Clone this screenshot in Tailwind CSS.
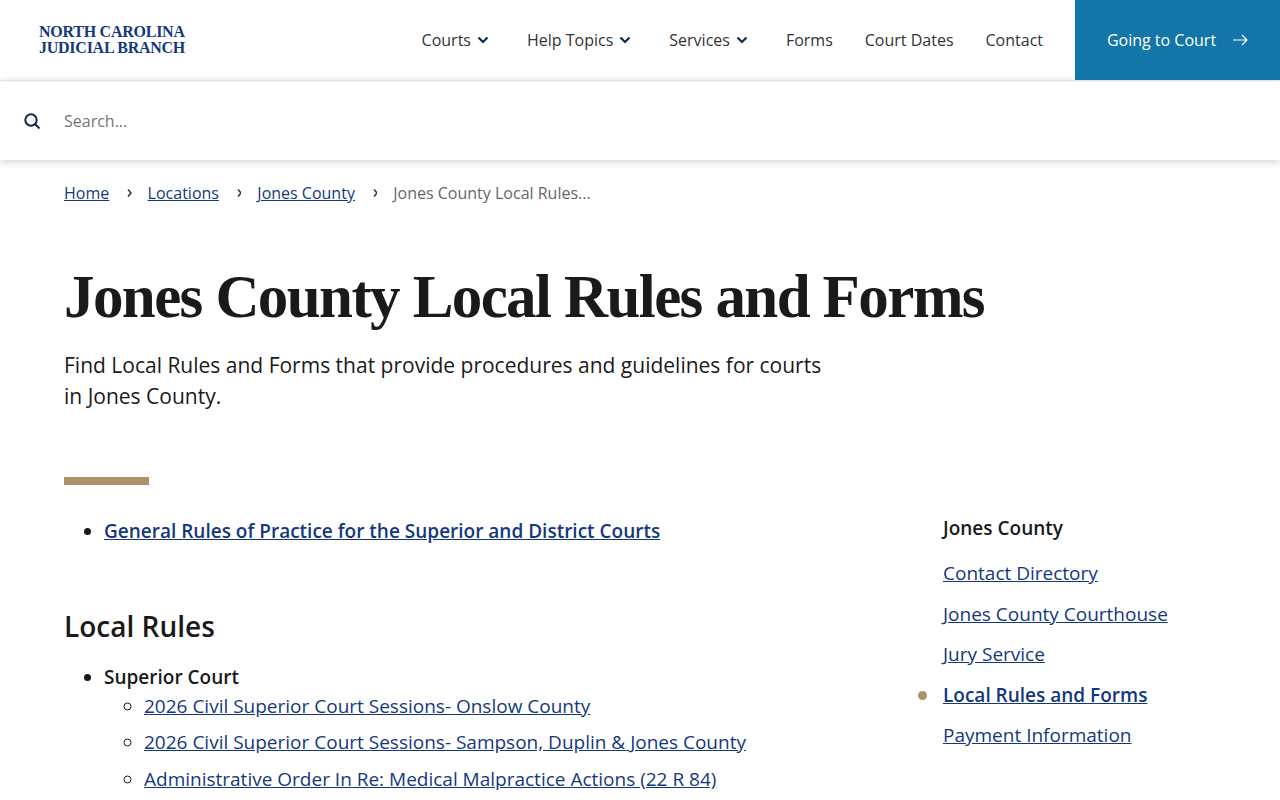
<!DOCTYPE html>
<html lang="en">
<head>
    <meta charset="UTF-8">
    <meta name="viewport" content="width=device-width, initial-scale=1.0">
    <title>Jones County Local Rules and Forms</title>
    <script src="https://cdn.jsdelivr.net/npm/@tailwindcss/browser@4"></script>
</head>
<body class="h-[800px] overflow-hidden bg-white font-['Open_Sans',sans-serif] text-[#1a1a1a]">
    <header class="relative z-10 flex h-20 items-center justify-between shadow-[0_1px_2px_rgba(0,0,0,0.15)]">
        <a href="#" class="ml-[39px] font-['Liberation_Serif',serif] text-[16px] leading-[16px] font-bold tracking-[-0.25px] text-[#14387f]">NORTH CAROLINA<br>JUDICIAL BRANCH</a>
        <nav class="flex h-full items-center text-base text-[#333]">
            <a href="#" class="mr-[38px] flex items-center gap-[6px]">Courts
                <svg class="h-3 w-3 text-[#0b2a4a]" viewBox="0 0 12 12" fill="none" stroke="currentColor" stroke-width="2.2"><path d="M1.5 3.5l4.5 4.5 4.5-4.5"/></svg>
            </a>
            <a href="#" class="mr-[38px] flex items-center gap-[6px]">Help Topics
                <svg class="h-3 w-3 text-[#0b2a4a]" viewBox="0 0 12 12" fill="none" stroke="currentColor" stroke-width="2.2"><path d="M1.5 3.5l4.5 4.5 4.5-4.5"/></svg>
            </a>
            <a href="#" class="mr-[38px] flex items-center gap-[6px]">Services
                <svg class="h-3 w-3 text-[#0b2a4a]" viewBox="0 0 12 12" fill="none" stroke="currentColor" stroke-width="2.2"><path d="M1.5 3.5l4.5 4.5 4.5-4.5"/></svg>
            </a>
            <a href="#" class="mr-8">Forms</a>
            <a href="#" class="mr-8">Court Dates</a>
            <a href="#" class="mr-8">Contact</a>
            <a href="#" class="flex h-full w-[205px] items-center justify-center gap-4 bg-[#1375a8] text-white">Going to Court
                <svg class="h-4 w-4" viewBox="0 0 16 16" fill="none" stroke="currentColor" stroke-width="1.2"><path d="M1 8h14M10 3l5 5-5 5"/></svg>
            </a>
        </nav>
    </header>

    <div class="flex h-20 items-center gap-6 pt-[2px] pl-6 shadow-[0_2px_8px_rgba(0,0,0,0.18)]">
        <svg class="h-4 w-4 text-[#0b2a4a]" viewBox="0 0 16 16" fill="none" stroke="currentColor" stroke-width="2"><circle cx="7" cy="7" r="5.7"/><path d="M11 11l4.5 4.5"/></svg>
        <input type="text" placeholder="Search..." class="w-96 text-base outline-none placeholder:text-[#757575]">
    </div>

    <main class="px-16">
        <nav class="flex h-[66px] items-center text-base">
            <a href="#" class="text-[#14387f] underline">Home</a>
            <svg class="mx-4 h-[10px] w-[6.4px] text-[#333]" viewBox="0 0 6.4 10" fill="none" stroke="currentColor" stroke-width="1.5"><path d="M3 1.5l3 3.5-3 3.5"/></svg>
            <a href="#" class="text-[#14387f] underline">Locations</a>
            <svg class="mx-4 h-[10px] w-[6.4px] text-[#333]" viewBox="0 0 6.4 10" fill="none" stroke="currentColor" stroke-width="1.5"><path d="M3 1.5l3 3.5-3 3.5"/></svg>
            <a href="#" class="text-[#14387f] underline">Jones County</a>
            <svg class="mx-4 h-[10px] w-[6.4px] text-[#333]" viewBox="0 0 6.4 10" fill="none" stroke="currentColor" stroke-width="1.5"><path d="M3 1.5l3 3.5-3 3.5"/></svg>
            <span class="text-[#666]">Jones County Local Rules...</span>
        </nav>

        <h1 class="mt-[34px] font-['Liberation_Serif',serif] text-[61px] leading-[74px] font-bold tracking-[-1.6px] whitespace-nowrap">Jones County Local Rules and Forms</h1>
        <p class="mt-[16px] w-[780px] text-[21px] leading-[31px]">Find Local Rules and Forms that provide procedures and guidelines for courts in Jones County.</p>
        <div class="mt-[65px] h-2 w-[85px] bg-[#ae9169]"></div>

        <div class="flex">
            <div class="w-[879px]">
                <ul class="mt-[32px] list-disc pl-10 text-[19px] font-semibold">
                    <li><a href="#" class="text-[#14387f] underline">General Rules of Practice for the Superior and District Courts</a></li>
                </ul>
                <h2 class="mt-[60px] text-[28px] leading-[40px] font-semibold">Local Rules</h2>
                <ul class="mt-[17px] list-disc pl-10 text-[19px]">
                    <li class="leading-[29px]">
                        <span class="font-semibold">Superior Court</span>
                        <ul class="list-[circle] pl-10">
                            <li class="leading-[29px]"><a href="#" class="text-[#14387f] underline">2026 Civil Superior Court Sessions- Onslow County</a></li>
                            <li class="mt-[7px] leading-[29px]"><a href="#" class="text-[#14387f] underline">2026 Civil Superior Court Sessions- Sampson, Duplin &amp; Jones County</a></li>
                            <li class="mt-[8px] leading-[29px]"><a href="#" class="text-[#14387f] underline">Administrative Order In Re: Medical Malpractice Actions (22 R 84)</a></li>
                        </ul>
                    </li>
                </ul>
            </div>
            <aside class="mt-[30px] text-[19px]">
                <h3 class="leading-[26px] font-semibold">Jones County</h3>
                <ul class="mt-[18px] flex flex-col gap-[12px] leading-[28.5px]">
                    <li><a href="#" class="text-[#14387f] underline">Contact Directory</a></li>
                    <li><a href="#" class="text-[#14387f] underline">Jones County Courthouse</a></li>
                    <li><a href="#" class="text-[#14387f] underline">Jury Service</a></li>
                    <li class="relative">
                        <span class="absolute top-[10px] -left-[25px] h-[9px] w-[9px] rounded-full bg-[#ae9169]"></span>
                        <a href="#" class="font-semibold text-[#14387f] underline">Local Rules and Forms</a>
                    </li>
                    <li><a href="#" class="text-[#14387f] underline">Payment Information</a></li>
                </ul>
            </aside>
        </div>
    </main>
</body>
</html>
